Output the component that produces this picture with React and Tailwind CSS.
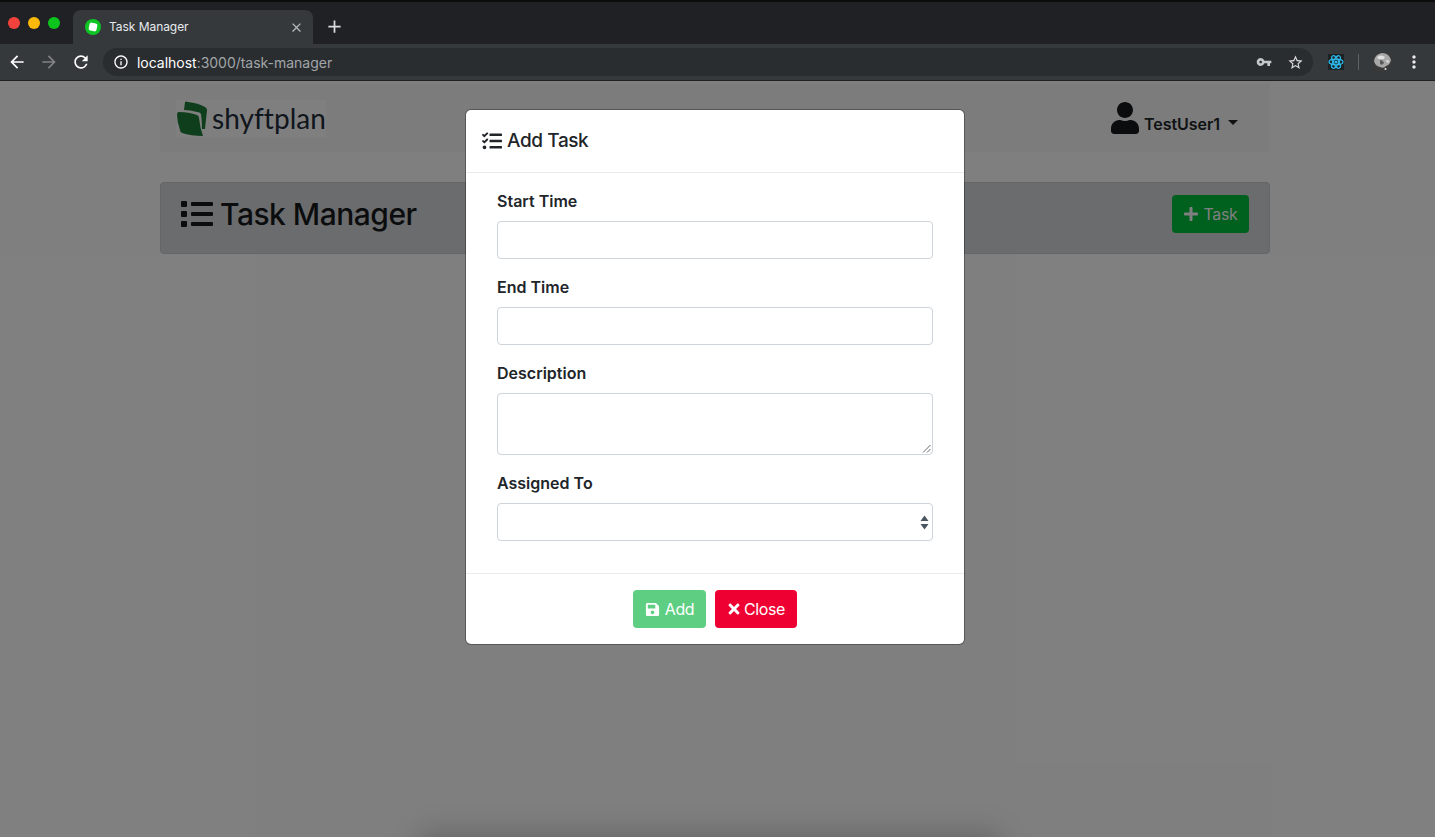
import React from "react";
import { FaUser, FaList, FaPlus, FaTasks, FaSave, FaTimes } from "react-icons/fa";
import { MdArrowBack, MdArrowForward, MdRefresh, MdInfoOutline, MdVpnKey, MdStarBorder, MdMoreVert, MdClose, MdAdd } from "react-icons/md";

function LogoMark() {
  return (
    <svg width="32" height="37" viewBox="0 0 32 37" className="shrink-0">
      <path d="M9 2 Q10 1 12 2 Q22 3 29 7 Q31 8 31 10 L29 29 L26 29 Q26 21 25 14 Q24 12 21 12 Q14 10 8 10 Z" fill="#1c7d38" />
      <path d="M1 14 Q1 12 3 12 Q13 12 21 15 Q23 16 23 18 Q24 28 27 36 Q15 36 6 33 Q4 32 4 30 Q1 22 1 14 Z" fill="#1c7d38" />
    </svg>
  );
}

function ReactIcon() {
  return (
    <svg width="16" height="16" viewBox="0 0 16 16">
      <rect width="16" height="16" fill="#1d2226" />
      <g fill="none" stroke="#2cb9ea" strokeWidth="1.2">
        <ellipse cx="8" cy="8" rx="7" ry="2.8" />
        <ellipse cx="8" cy="8" rx="7" ry="2.8" transform="rotate(60 8 8)" />
        <ellipse cx="8" cy="8" rx="7" ry="2.8" transform="rotate(120 8 8)" />
      </g>
      <circle cx="8" cy="8" r="1.6" fill="#2cb9ea" />
    </svg>
  );
}

function Avatar() {
  return (
    <svg width="20" height="20" viewBox="0 0 20 20">
      <circle cx="10" cy="10" r="10" fill="#3a3a3a" />
      <path d="M2 9 Q3 2 10 1 Q17 1 19 8 Q18 13 14 14 Q12 17 8 15 Q3 14 2 9 Z" fill="#a8a8a8" />
      <path d="M5 5 Q9 2 13 5 Q12 8 9 7 Q6 8 5 5 Z M14 8 Q17 8 17 10 Q15 12 14 8 Z" fill="#e0e0e0" />
      <path d="M8 8 Q11 8 12 11 Q10 14 8 12 Z" fill="#5a5a5a" />
      <circle cx="13.5" cy="17" r="1" fill="#e8e8e8" />
    </svg>
  );
}

function Field({ label, children, className = "" }) {
  return (
    <div className={className}>
      <label className="block text-[16px] leading-[24px] font-semibold text-[#212529] mb-2">{label}</label>
      {children}
    </div>
  );
}

const inputCls = "block w-full h-[38px] rounded border border-[#ced4da] bg-white";

export default function App() {
  return (
    <div className="w-[1435px] h-[837px] overflow-hidden flex flex-col bg-[#202124] font-['Inter','Liberation_Sans',sans-serif]">
      {/* Browser chrome */}
      <div className="h-[2px] bg-[#0c0c0d] shrink-0" />
      <div className="h-[42px] shrink-0 bg-[#202124] flex items-end pl-[73px] relative">
        <div className="absolute left-[8px] top-[15px] flex gap-[8px]">
          <span className="w-[12px] h-[12px] rounded-full bg-[#f4433c]" />
          <span className="w-[12px] h-[12px] rounded-full bg-[#fdb90a]" />
          <span className="w-[12px] h-[12px] rounded-full bg-[#0dc41d]" />
        </div>
        <div className="w-[240px] h-[34px] bg-[#35393c] rounded-t-[8px] flex items-center pl-[12px] pr-[9px]">
          <span className="w-[16px] h-[16px] rounded-full bg-[#0fc524] flex items-center justify-center shrink-0">
            <span className="w-[8px] h-[8px] rounded-[2px] bg-white rotate-12" />
          </span>
          <span className="ml-[8px] text-[12px] tracking-[-0.05px] text-[#e8eaed] flex-1">Task Manager</span>
          <MdClose className="text-[#b5b8bb] text-[15px]" />
        </div>
        <MdAdd className="text-[#dadce0] text-[21px] ml-[11px] mb-[7px]" />
      </div>
      <div className="h-[37px] shrink-0 bg-[#35393c] border-b border-[#1f2022] flex items-center pl-[7px] pr-[11px]">
        <MdArrowBack className="text-white text-[20px]" />
        <MdArrowForward className="text-[#7f8285] text-[20px] ml-[12px]" />
        <MdRefresh className="text-white text-[20px] ml-[12px]" />
        <div className="ml-[12px] w-[1210px] h-[28px] rounded-full bg-[#292d30] flex items-center pl-[10px] pr-[9px]">
          <MdInfoOutline className="text-white text-[16px]" />
          <span className="ml-[8px] text-[14px] tracking-[-0.02px] text-white">localhost<span className="text-[#a2a5a8]">:3000/task-manager</span></span>
          <MdVpnKey className="ml-auto text-[#c5c8cb] text-[16px]" />
          <MdStarBorder className="ml-[15px] text-[#dadce0] text-[17px]" />
        </div>
        <span className="ml-[15px] flex"><ReactIcon /></span>
        <span className="ml-[14px] w-px h-[16px] bg-[#5f6366]" />
        <span className="ml-[13px] flex"><Avatar /></span>
        <MdMoreVert className="ml-[12px] text-[#e8eaed] text-[20px]" />
      </div>

      {/* Page */}
      <div className="relative flex-1 bg-white overflow-hidden">
        <div className="ml-[160px] w-[1110px] pt-[3px]">
          <nav className="h-[68px] bg-[#f8f9fa] flex items-center pl-[16px] pr-[30px]">
            <div className="flex items-center h-[37px] w-[150px] bg-white">
              <LogoMark />
              <span className="ml-[4px] text-[28px] leading-none tracking-[0.05px] text-[#1f2c3a] font-['Lato',sans-serif] font-normal">shyftplan</span>
            </div>
            <div className="ml-auto flex items-center text-[#212529]">
              <FaUser className="text-[#16181b] text-[32px]" />
              <span className="ml-[3px] mt-[12px] text-[16px] tracking-[-0.05px] font-semibold">TestUser1</span>
              <span className="ml-[8px] mt-[8px] w-0 h-0 border-x-[5px] border-x-transparent border-t-[5px] border-t-[#212529]" />
              <span className="w-[2px]" />
            </div>
          </nav>
          <div className="mt-[30px] h-[72px] rounded border border-[#c8cacd] bg-[#d6d8dc] flex items-start pl-[20px] pr-[20px] pt-[12px]">
            <div className="h-[38px] flex items-center">
              <FaList className="text-[#16181b] text-[32px]" />
              <h1 className="ml-[7px] text-[30px] leading-none font-medium text-[#16181b] tracking-[-0.5px]">Task Manager</h1>
            </div>
            <button className="ml-auto w-[77px] h-[38px] rounded bg-[#00c03c] text-white text-[16px] tracking-[-0.3px] flex items-center justify-center gap-[4px]">
              <FaPlus className="text-[16px]" />Task
            </button>
          </div>
        </div>

        {/* Modal backdrop */}
        <div className="absolute inset-0 bg-black/50" />
        <div className="absolute left-[420px] right-[435px] bottom-[-46px] h-[50px] bg-black/20 blur-[14px]" />

        {/* Modal */}
        <div className="absolute left-[466px] top-[29px] w-[498px] h-[534px] bg-white rounded-[5px] ring-1 ring-black/30 flex flex-col">
          <div className="h-[63px] shrink-0 border-b border-[#e9ecef] flex items-center pl-[16px]">
            <FaTasks className="text-[#212529] text-[20px]" />
            <span className="ml-[5px] mt-[1px] text-[19px] font-medium text-[#212529] tracking-[-0.4px]">Add Task</span>
          </div>
          <div className="flex-1 px-[31px] pt-[16px]">
            <Field label="Start Time" className="mb-[16px]"><div className={inputCls} /></Field>
            <Field label="End Time" className="mb-[16px]"><div className={inputCls} /></Field>
            <Field label="Description" className="mb-[16px]">
              <div className="relative w-full h-[62px] rounded border border-[#ced4da] bg-white">
                <svg className="absolute right-[1px] bottom-[1px]" width="9" height="9" viewBox="0 0 9 9">
                  <path d="M8.5 1 L1 8.5 M8.5 5 L5 8.5" stroke="#666" strokeWidth="1" />
                </svg>
              </div>
            </Field>
            <Field label="Assigned To">
              <div className={`${inputCls} relative`}>
                <svg className="absolute right-[3px] top-[11px]" width="9" height="15" viewBox="0 0 9 15">
                  <path d="M4.5 0.5 L8.5 6 H0.5 Z M0.5 9 H8.5 L4.5 14.5 Z" fill="#4a5560" />
                </svg>
              </div>
            </Field>
          </div>
          <div className="h-[71px] shrink-0 border-t border-[#e9ecef] flex items-center justify-center gap-[9px]">
            <button className="w-[73px] h-[38px] rounded bg-[#5ecf82] text-white text-[16px] tracking-[-0.35px] flex items-center justify-center gap-[5px]">
              <FaSave className="text-[15px]" />Add
            </button>
            <button className="w-[82px] h-[38px] rounded bg-[#ee0033] text-white text-[16px] tracking-[-0.4px] flex items-center pl-[11px] gap-[2px]">
              <FaTimes className="text-[16px]" />Close
            </button>
          </div>
        </div>
      </div>
    </div>
  );
}
